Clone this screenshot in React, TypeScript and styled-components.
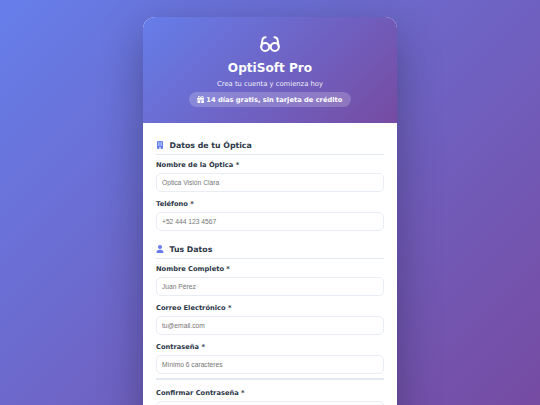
import React from 'react';
import styled, { createGlobalStyle } from 'styled-components';
import { FaBuilding, FaGift, FaUser } from 'react-icons/fa6';

const GlobalStyle = createGlobalStyle`
  * {
    box-sizing: border-box;
  }
  html,
  body {
    margin: 0;
    height: 405px;
    overflow: hidden;
  }
  body {
    font-family: 'DejaVu Sans', sans-serif;
  }
`;

const Page = styled.div`
  display: flex;
  justify-content: center;
  align-items: flex-start;
  height: 405px;
  padding-top: 17px;
  overflow: hidden;
  background: linear-gradient(135deg, #667eea 0%, #764ba2 100%);
`;

const Card = styled.div`
  width: 254px;
  flex-shrink: 0;
  border-radius: 12px;
  overflow: hidden;
  background: #ffffff;
  box-shadow: 0 15px 45px rgba(0, 0, 0, 0.3);
`;

const Header = styled.header`
  display: flex;
  flex-direction: column;
  align-items: center;
  height: 106px;
  padding-top: 19px;
  color: #ffffff;
  background: linear-gradient(135deg, #667eea 0%, #764ba2 100%);
`;

const Logo = styled.svg`
  display: block;
  width: 20px;
  height: 16px;
  margin-bottom: 8px;
  fill: none;
  stroke: currentColor;
  stroke-width: 1.9;
  stroke-linecap: round;
`;

const Title = styled.h1`
  margin: 0;
  font-size: 12.1px;
  line-height: 16px;
  font-weight: 700;
`;

const Subtitle = styled.p`
  margin: 3px 0 0;
  font-size: 6.8px;
  line-height: 10px;
  opacity: 0.9;
`;

const Badge = styled.div`
  display: flex;
  align-items: center;
  gap: 2px;
  height: 15px;
  margin-top: 3px;
  padding: 0 9px 0 8px;
  border-radius: 8px;
  font-size: 6.7px;
  font-weight: 700;
  background: rgba(255, 255, 255, 0.2);

  svg {
    font-size: 7.6px;
  }
`;

const Form = styled.form`
  display: flex;
  flex-direction: column;
  padding: 16px 13px 20px;
`;

const Section = styled.section`
  display: flex;
  flex-direction: column;
  margin-bottom: 12px;
`;

const SectionTitle = styled.h2`
  display: flex;
  align-items: center;
  gap: 5.5px;
  height: 16px;
  margin: 0 0 5px;
  padding-bottom: 3px;
  border-bottom: 1px solid #e2e8f0;
  font-size: 7.8px;
  font-weight: 700;
  color: #2d3748;

  svg {
    color: #667eea;
    font-size: 8px;
  }
`;

const Field = styled.div`
  display: flex;
  flex-direction: column;
  margin-bottom: 7px;

  &:last-child {
    margin-bottom: 0;
  }
`;

const Label = styled.label`
  height: 10px;
  margin-bottom: 3px;
  font-size: 6.7px;
  line-height: 10px;
  font-weight: 700;
  color: #2d3748;
`;

const Input = styled.input`
  width: 100%;
  height: 19px;
  padding: 0 5px 1px;
  border: 1px solid #e8ecf3;
  border-radius: 5px;
  outline: none;
  font-family: 'Liberation Sans', Arial, sans-serif;
  font-size: 6.7px;
  background: #ffffff;

  &::placeholder {
    color: #757575;
  }
`;

const StrengthBar = styled.div`
  height: 2px;
  margin: 4px 0 1px;
  background: #e2e8f0;
`;

const App: React.FC = () => {
  return (
    <>
      <GlobalStyle />
      <Page>
        <Card>
          <Header>
            <Logo viewBox="0 0 20 16">
              <circle cx="5.2" cy="11" r="4" />
              <circle cx="14.8" cy="11" r="4" />
              <path d="M1.2 11 L2.4 4 Q2.8 1.4 5.6 1.2" />
              <path d="M18.8 11 L17.6 4 Q17.2 1.4 14.4 1.2" />
              <path d="M8.8 9.6 Q10 8.8 11.2 9.6" />
            </Logo>
            <Title>OptiSoft Pro</Title>
            <Subtitle>Crea tu cuenta y comienza hoy</Subtitle>
            <Badge>
              <FaGift />
              14 días gratis, sin tarjeta de crédito
            </Badge>
          </Header>
          <Form>
            <Section>
              <SectionTitle>
                <FaBuilding />
                Datos de tu Óptica
              </SectionTitle>
              <Field>
                <Label>Nombre de la Óptica *</Label>
                <Input placeholder="Óptica Visión Clara" />
              </Field>
              <Field>
                <Label>Teléfono *</Label>
                <Input placeholder="+52 444 123 4567" />
              </Field>
            </Section>
            <Section>
              <SectionTitle>
                <FaUser />
                Tus Datos
              </SectionTitle>
              <Field>
                <Label>Nombre Completo *</Label>
                <Input placeholder="Juan Pérez" />
              </Field>
              <Field>
                <Label>Correo Electrónico *</Label>
                <Input placeholder="tu@email.com" />
              </Field>
              <Field>
                <Label>Contraseña *</Label>
                <Input placeholder="Mínimo 6 caracteres" />
                <StrengthBar />
              </Field>
              <Field>
                <Label>Confirmar Contraseña *</Label>
                <Input placeholder="Repite tu contraseña" />
              </Field>
            </Section>
          </Form>
        </Card>
      </Page>
    </>
  );
};

export default App;
